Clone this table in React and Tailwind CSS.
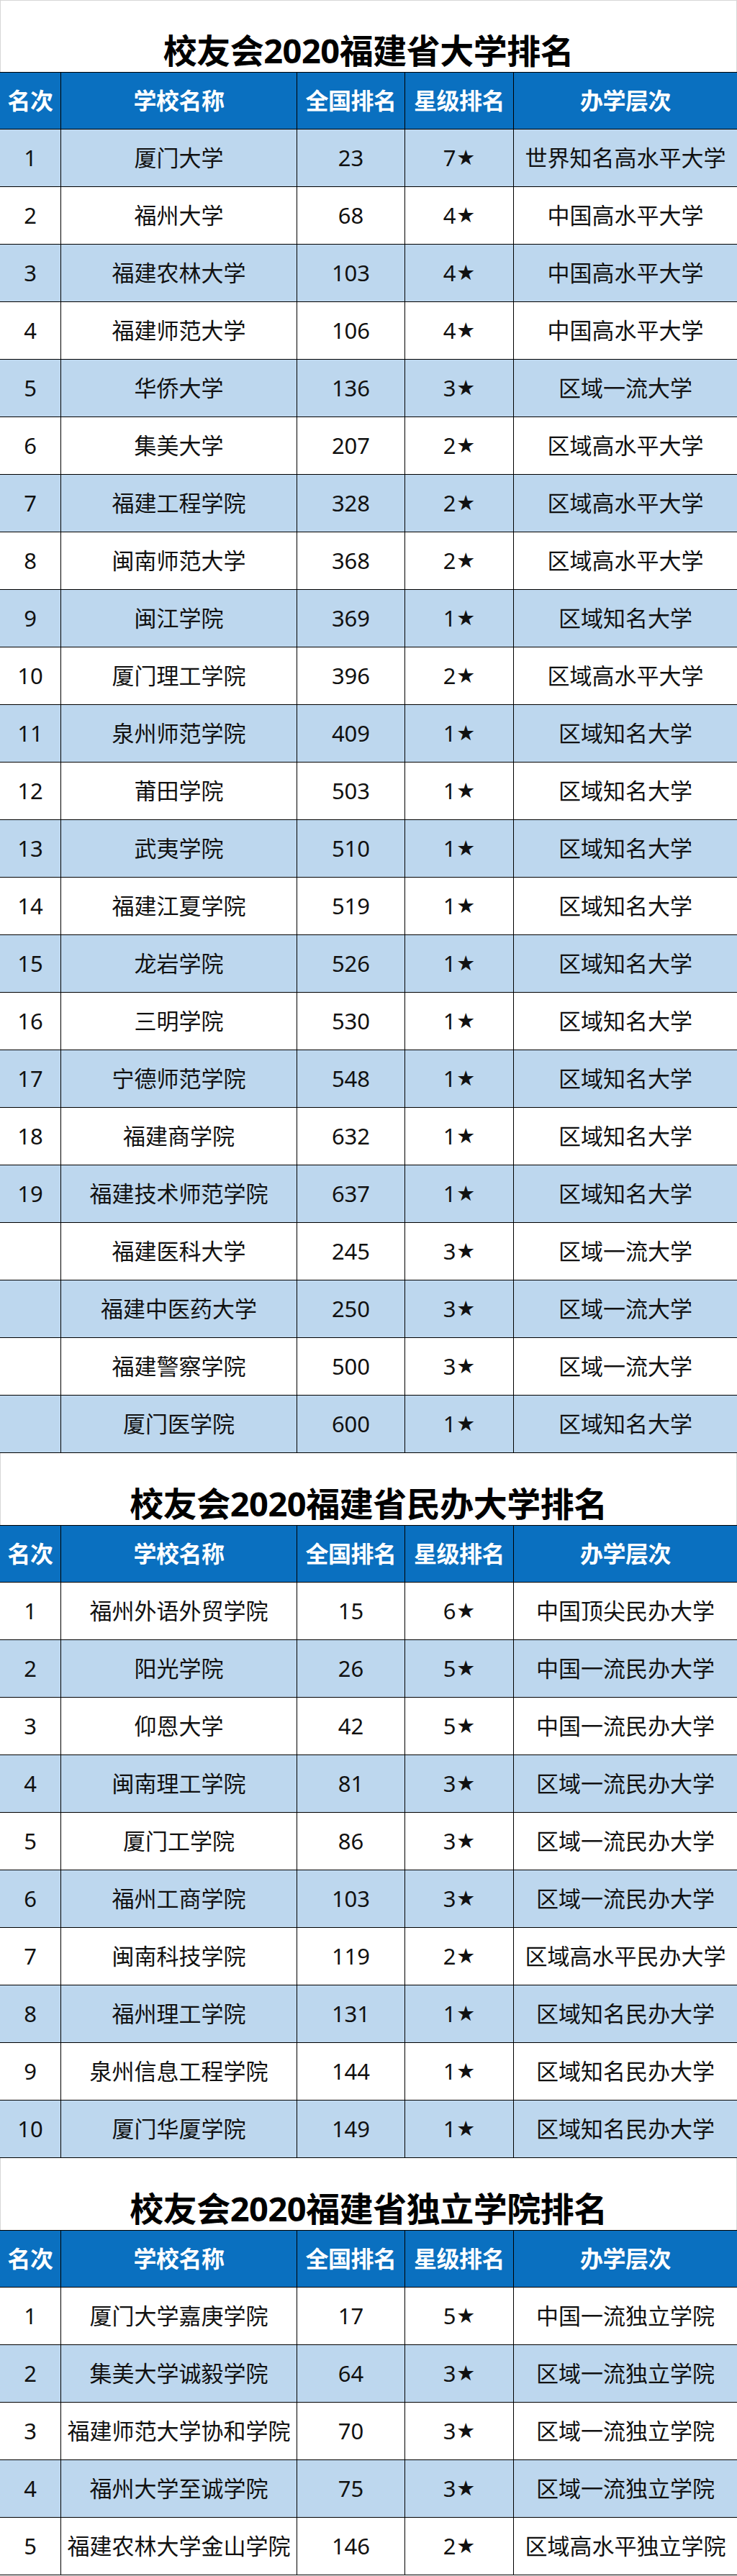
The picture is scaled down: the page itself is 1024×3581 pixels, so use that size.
import React from "react";

const S1 = [
  ["1", "厦门大学", "23", "7", "世界知名高水平大学"],
  ["2", "福州大学", "68", "4", "中国高水平大学"],
  ["3", "福建农林大学", "103", "4", "中国高水平大学"],
  ["4", "福建师范大学", "106", "4", "中国高水平大学"],
  ["5", "华侨大学", "136", "3", "区域一流大学"],
  ["6", "集美大学", "207", "2", "区域高水平大学"],
  ["7", "福建工程学院", "328", "2", "区域高水平大学"],
  ["8", "闽南师范大学", "368", "2", "区域高水平大学"],
  ["9", "闽江学院", "369", "1", "区域知名大学"],
  ["10", "厦门理工学院", "396", "2", "区域高水平大学"],
  ["11", "泉州师范学院", "409", "1", "区域知名大学"],
  ["12", "莆田学院", "503", "1", "区域知名大学"],
  ["13", "武夷学院", "510", "1", "区域知名大学"],
  ["14", "福建江夏学院", "519", "1", "区域知名大学"],
  ["15", "龙岩学院", "526", "1", "区域知名大学"],
  ["16", "三明学院", "530", "1", "区域知名大学"],
  ["17", "宁德师范学院", "548", "1", "区域知名大学"],
  ["18", "福建商学院", "632", "1", "区域知名大学"],
  ["19", "福建技术师范学院", "637", "1", "区域知名大学"],
  ["", "福建医科大学", "245", "3", "区域一流大学"],
  ["", "福建中医药大学", "250", "3", "区域一流大学"],
  ["", "福建警察学院", "500", "3", "区域一流大学"],
  ["", "厦门医学院", "600", "1", "区域知名大学"],
];

const S2 = [
  ["1", "福州外语外贸学院", "15", "6", "中国顶尖民办大学"],
  ["2", "阳光学院", "26", "5", "中国一流民办大学"],
  ["3", "仰恩大学", "42", "5", "中国一流民办大学"],
  ["4", "闽南理工学院", "81", "3", "区域一流民办大学"],
  ["5", "厦门工学院", "86", "3", "区域一流民办大学"],
  ["6", "福州工商学院", "103", "3", "区域一流民办大学"],
  ["7", "闽南科技学院", "119", "2", "区域高水平民办大学"],
  ["8", "福州理工学院", "131", "1", "区域知名民办大学"],
  ["9", "泉州信息工程学院", "144", "1", "区域知名民办大学"],
  ["10", "厦门华厦学院", "149", "1", "区域知名民办大学"],
];

const S3 = [
  ["1", "厦门大学嘉庚学院", "17", "5", "中国一流独立学院"],
  ["2", "集美大学诚毅学院", "64", "3", "区域一流独立学院"],
  ["3", "福建师范大学协和学院", "70", "3", "区域一流独立学院"],
  ["4", "福州大学至诚学院", "75", "3", "区域一流独立学院"],
  ["5", "福建农林大学金山学院", "146", "2", "区域高水平独立学院"],
];

const HEAD = ["名次", "学校名称", "全国排名", "星级排名", "办学层次"];

const rowGrid =
  "grid grid-cols-[85px_328px_150px_151px_1fr] h-[80px] border-b border-black";

function Cell({ children, last }) {
  return (
    <div
      className={
        "flex items-center justify-center whitespace-nowrap " +
        (last ? "" : "border-r border-black")
      }
    >
      {children}
    </div>
  );
}

function Section({ title, rows, oddBlue, first }) {
  return (
    <section>
      <div
        className={
          "h-[100px] flex items-end justify-center border-x border-[#d6d6d6] pb-[2px] " +
          (first ? "border-t" : "")
        }
      >
        <h1 className="text-[47px] leading-[56px] font-bold text-black tracking-[-0.5px]">
          {title}
        </h1>
      </div>
      <div
        className={
          rowGrid +
          " border-t bg-[#0a70c0] text-white font-bold text-[32px] tracking-[-0.5px]"
        }
      >
        {HEAD.map((h, i) => (
          <Cell key={h} last={i === 4}>
            {h}
          </Cell>
        ))}
      </div>
      {rows.map((r, idx) => {
        const blue = oddBlue ? idx % 2 === 0 : idx % 2 === 1;
        return (
          <div
            key={idx}
            className={
              rowGrid +
              " text-[31px] text-[#111111] " +
              (blue ? "bg-[#bdd7ee]" : "bg-white")
            }
          >
            <Cell>{r[0]}</Cell>
            <Cell>{r[1]}</Cell>
            <Cell>{r[2]}</Cell>
            <Cell>
              {r[3]}
              <span className="text-[29px] leading-none ml-[1px] font-['DejaVu_Sans',sans-serif]">
                ★
              </span>
            </Cell>
            <Cell last>{r[4]}</Cell>
          </div>
        );
      })}
    </section>
  );
}

export default function App() {
  return (
    <div className="w-[1024px] bg-white font-['Noto_Sans','Noto_Sans_CJK_SC',sans-serif]">
      <Section title="校友会2020福建省大学排名" rows={S1} oddBlue first />
      <Section title="校友会2020福建省民办大学排名" rows={S2} oddBlue={false} />
      <Section title="校友会2020福建省独立学院排名" rows={S3} oddBlue={false} />
    </div>
  );
}
